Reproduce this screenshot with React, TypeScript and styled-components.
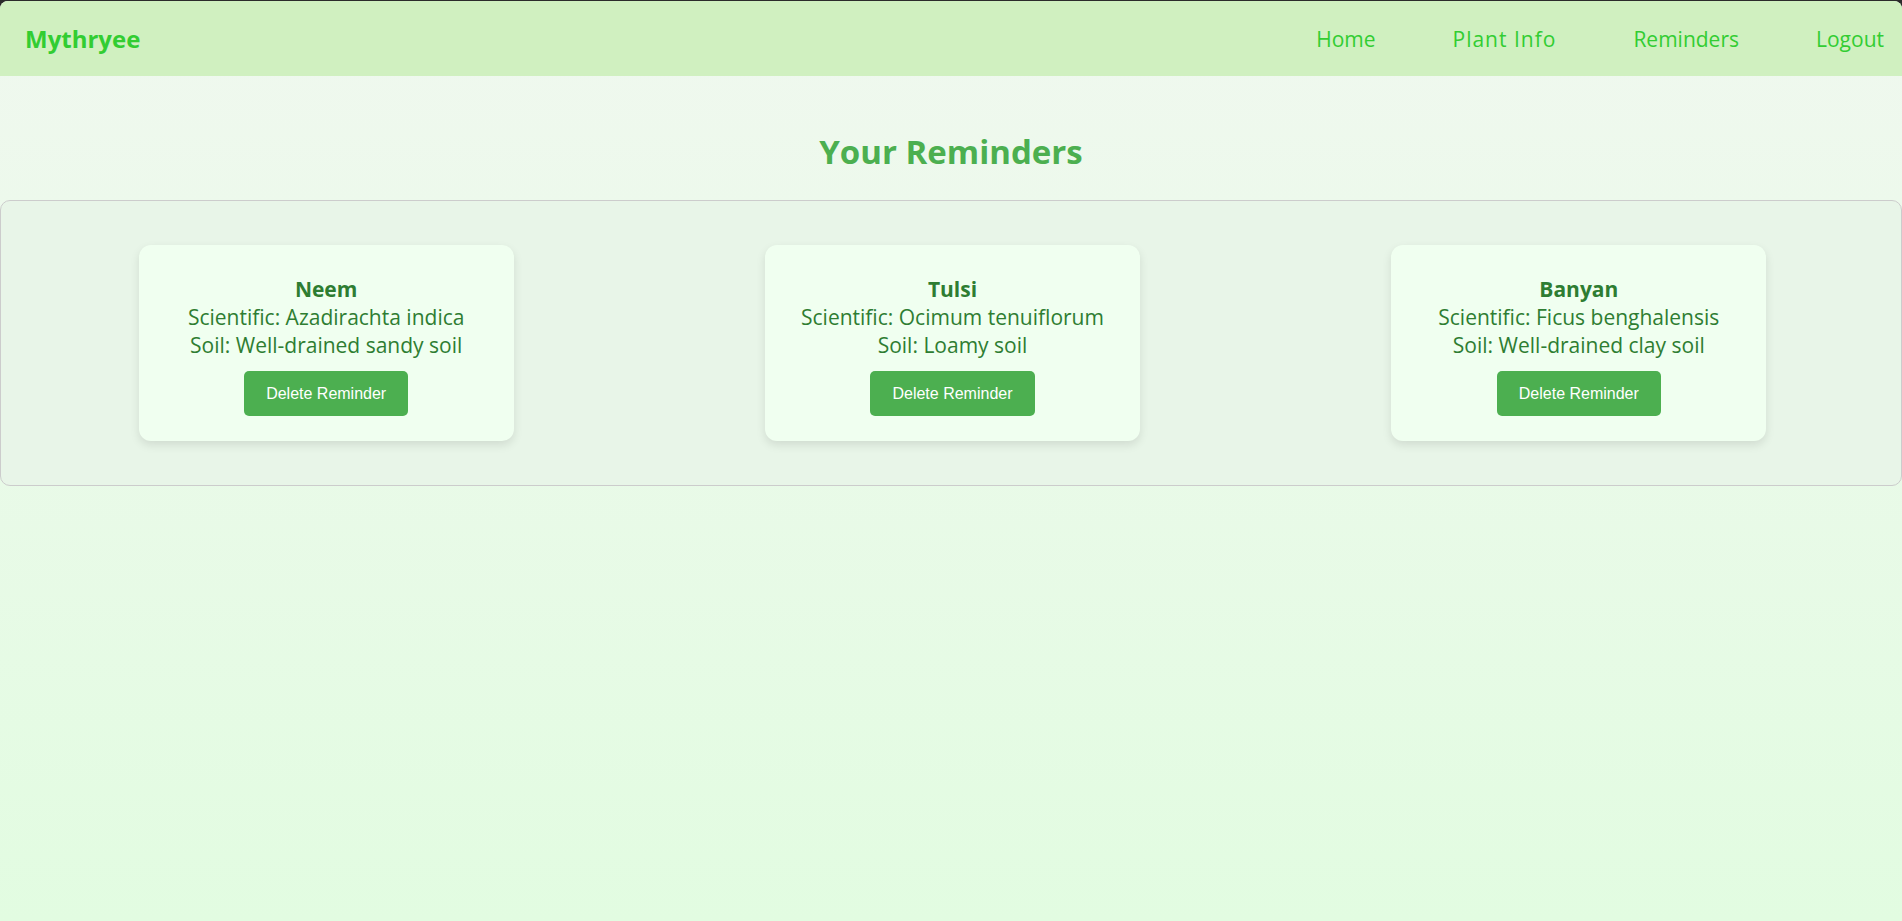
import React from "react";
import styled, { createGlobalStyle } from "styled-components";

const GlobalStyle = createGlobalStyle`
  html, body {
    margin: 0;
    padding: 0;
    background: #2b2b2b;
  }
  #root {
    min-height: 100vh;
  }
  * { box-sizing: border-box; }
`;

const Page = styled.div`
  min-height: calc(100vh - 1px);
  margin-top: 1px;
  border-radius: 8px 8px 0 0;
  overflow: hidden;
  background: linear-gradient(180deg, #f0f8ef 0%, #e2fce1 100%);
  font-family: "Open Sans", "Noto Sans", sans-serif;
  display: flex;
  flex-direction: column;
`;

const NavBar = styled.nav`
  height: 75px;
  background: #d0f0c0;
  display: flex;
  align-items: center;
  justify-content: space-between;
  padding: 0 18px 0 25px;
`;

const Logo = styled.div`
  font-size: 24px;
  font-weight: 700;
  color: #32cd32;
  line-height: 30px;
`;

const NavLinks = styled.ul`
  display: flex;
  gap: 77px;
  list-style: none;
  margin: 0;
  padding: 0;
`;

const NavLink = styled.a<{ $wide?: boolean }>`
  font-size: 21px;
  color: #32cd32;
  text-decoration: none;
  line-height: 28px;
  cursor: pointer;
  letter-spacing: ${(p) => (p.$wide ? "1px" : "0")};
`;

const Title = styled.h2`
  margin: 54px 0 26px;
  text-align: center;
  font-size: 33px;
  line-height: 44px;
  font-weight: 700;
  color: #4caf50;
`;

const CardList = styled.section`
  display: flex;
  justify-content: space-around;
  align-items: flex-start;
  padding: 44px 9px 44px 12px;
  background: #e8f5e8;
  border: 1px solid #cccccc;
  border-radius: 10px;
`;

const Card = styled.div`
  width: 375px;
  padding: 30px 20px 25px;
  background: #f0fff0;
  border-radius: 12px;
  box-shadow: 0 4px 10px rgba(0, 0, 0, 0.1);
  display: flex;
  flex-direction: column;
  align-items: center;
  color: #2e7d32;
  text-align: center;
`;

const PlantName = styled.h3`
  margin: 0;
  font-size: 21px;
  line-height: 28px;
  font-weight: 700;
`;

const Detail = styled.p`
  margin: 0;
  font-size: 21px;
  line-height: 28px;
`;

const DeleteButton = styled.button`
  margin-top: 12px;
  height: 45px;
  padding: 0 22px;
  background: #4caf50;
  color: #ffffff;
  border: none;
  border-radius: 5px;
  font-family: "Liberation Sans", Arial, sans-serif;
  font-size: 16px;
  cursor: pointer;
`;

type Reminder = { name: string; scientific: string; soil: string };

const reminders: Reminder[] = [
  { name: "Neem", scientific: "Azadirachta indica", soil: "Well-drained sandy soil" },
  { name: "Tulsi", scientific: "Ocimum tenuiflorum", soil: "Loamy soil" },
  { name: "Banyan", scientific: "Ficus benghalensis", soil: "Well-drained clay soil" },
];

export default function App() {
  return (
    <>
      <GlobalStyle />
      <Page>
        <NavBar>
          <Logo>Mythryee</Logo>
          <NavLinks>
            <li><NavLink>Home</NavLink></li>
            <li><NavLink $wide>Plant Info</NavLink></li>
            <li><NavLink>Reminders</NavLink></li>
            <li><NavLink>Logout</NavLink></li>
          </NavLinks>
        </NavBar>
        <Title>Your Reminders</Title>
        <CardList>
          {reminders.map((r) => (
            <Card key={r.name}>
              <PlantName>{r.name}</PlantName>
              <Detail>Scientific: {r.scientific}</Detail>
              <Detail>Soil: {r.soil}</Detail>
              <DeleteButton>Delete Reminder</DeleteButton>
            </Card>
          ))}
        </CardList>
      </Page>
    </>
  );
}
